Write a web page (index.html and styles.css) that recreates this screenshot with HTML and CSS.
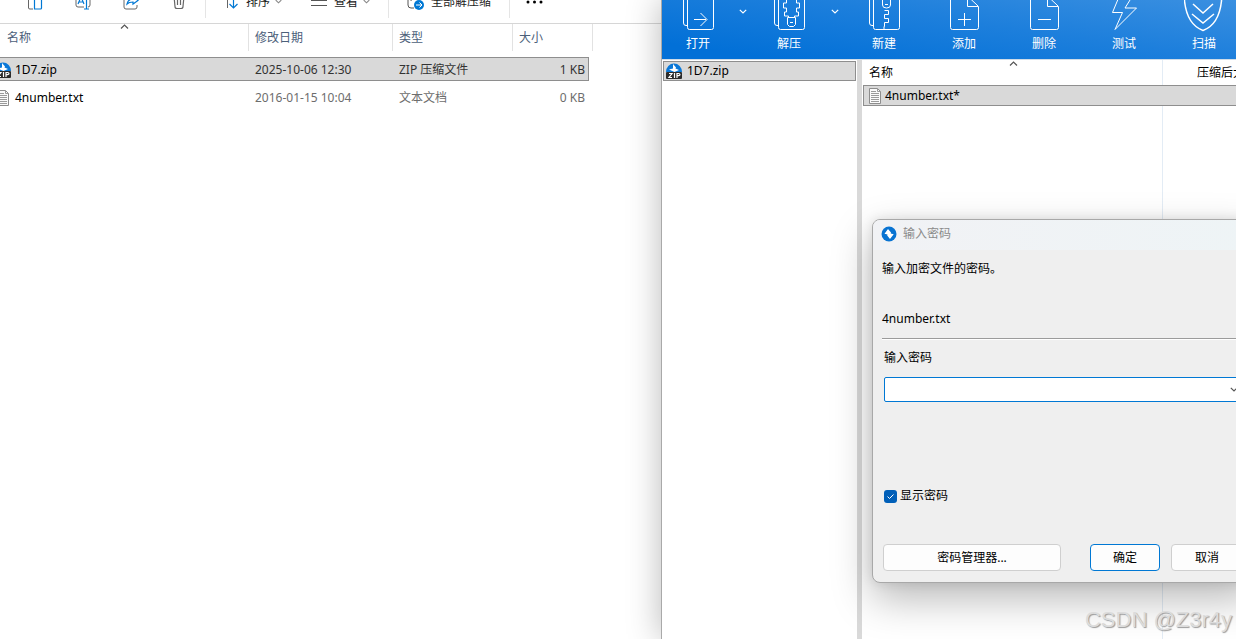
FILE: index.html
```html
<!DOCTYPE html>
<html lang="zh-CN">
<head>
<meta charset="utf-8">
<title>1D7.zip</title>
<link rel="stylesheet" href="styles.css">
</head>
<body>
<svg class="defs" width="0" height="0" aria-hidden="true">
  <symbol id="zip" viewBox="0 0 16 16">
    <path d="M0 9A8 8.500 0 0 1 16 9z" fill="#0a78d8"/>
    <path d="M7 1l3 3.500-.5 1L13 7 8.500 9 3 6.500 7 5.500z" fill="#fff"/>
    <rect y="9" width="16" height="7" rx="1" fill="#2b2b2b"/>
    <path d="M3 10.500h3l-3 4h3M8.500 10v5M11 15v-4.500h1.500q1.500 0 1.500 1t-1.500 1.200H11" fill="none" stroke="#fff" stroke-width="1.200"/>
  </symbol>
  <symbol id="txt" viewBox="0 0 12 16">
    <path d="M.5.500h8l3 3v12H.5z" fill="#fafafa" stroke="#8d8d8d"/>
    <path d="M8.500.500v3h3M2 3.500h5M2 5.500h8M2 7.500h8M2 9.500h8M2 11.500h8M2 13.500h8" fill="none" stroke="#9a9a9a"/>
  </symbol>
  <symbol id="down" viewBox="0 0 8 5"><path d="M.8.800L4 4 7.200.800" fill="none" stroke="currentColor" stroke-width="1.200"/></symbol>
  <symbol id="up" viewBox="0 0 8 5"><path d="M.5 4.500L4 1l3.500 3.500" fill="none" stroke="currentColor" stroke-width="1.200"/></symbol>
</svg>

<main class="desktop">
  <section class="explorer">
    <nav class="toolbar">
      <button class="tool" aria-label="复制"><svg width="16" height="16" fill="none"><path d="M6 .5H3q-1.500 0-1.500 1.500v12q0 1 1.500 1h3" stroke="#666"/><path d="M7.500.500h6q1 0 1 1v12.500q0 1-1 1h-6z" stroke="#0078d4" stroke-width="1.200"/></svg></button>
      <button class="tool" aria-label="重命名"><svg width="16" height="16" fill="none"><path d="M9 2.500H3q-2 0-2 2V11q0 2 2 2h6M13 2.500q2 0 2 2V11q0 2-2 2" stroke="#666"/><path d="M3 10l3-7 3 7M4 8h4M11.500 1v14M9 15h5" stroke="#0078d4" stroke-width="1.200"/></svg></button>
      <button class="tool" aria-label="共享"><svg width="16" height="16" fill="none"><path d="M5 2H3q-2 0-2 2v9q0 2 2 2h9q2 0 2-2v-2" stroke="#666"/><path d="M4 10q1-5 6-5V2l5 4.500L10 10V8q-4 0-6 2z" stroke="#0078d4" stroke-width="1.200"/></svg></button>
      <button class="tool" aria-label="删除"><svg width="16" height="16" fill="none"><path d="M2 1.500h12M3 2l1 10.500q0 2 2 2h4q2 0 2-2L13 2M6.500 4v7M9.500 4v7" stroke="#666" stroke-width="1.200"/></svg></button>
      <button class="tool sort"><svg width="16" height="16" fill="none"><path d="M4.500 1v13M2 3l2.500-2" stroke="#666"/><path d="M10.500 1v13M6.500 10l4 4 4-4" stroke="#0078d4" stroke-width="1.200"/></svg><span>排序</span><svg class="caret" width="7" height="5"><use href="#down"/></svg></button>
      <button class="tool view"><svg width="16" height="16" fill="none"><path d="M0 6.500h16M0 11.500h16" stroke="#555"/></svg><span>查看</span><svg class="caret" width="7" height="5"><use href="#down"/></svg></button>
      <button class="tool extract"><svg width="18" height="18" fill="none"><path d="M1 1v11q0 3 3 3h3M5 1l-1 7" stroke="#555"/><circle cx="12" cy="12" r="5" fill="#0078d4"/><path d="M9 12h5.500M12.500 9.500L15 12l-2.500 2.500" stroke="#fff"/></svg><span>全部解压缩</span></button>
      <button class="tool more" aria-label="更多"><svg width="17" height="4"><circle cx="2" cy="2" r="1.500"/><circle cx="8.500" cy="2" r="1.500"/><circle cx="15" cy="2" r="1.500"/></svg></button>
    </nav>
    <table class="files">
      <colgroup><col class="c-name"><col class="c-date"><col class="c-type"><col class="c-size"><col class="c-end"></colgroup>
      <thead><tr><th><svg class="sorted" width="9" height="5"><use href="#up"/></svg>名称</th><th>修改日期</th><th>类型</th><th class="last">大小</th><th></th></tr></thead>
      <tbody>
        <tr class="selected"><td><span class="file"><svg width="11" height="16" viewBox="5 0 11 16"><use href="#zip" width="16" height="16"/></svg>1D7.zip</span></td><td>2025-10-06 12:30</td><td>ZIP 压缩文件</td><td class="num">1 KB</td></tr>
        <tr><td><span class="file"><svg width="11" height="16" viewBox="3 0 11 16"><use href="#txt" width="12" height="16"/></svg>4number.txt</span></td><td>2016-01-15 10:04</td><td>文本文档</td><td class="num">0 KB</td></tr>
      </tbody>
    </table>
  </section>

  <section class="archiver">
    <nav class="ribbon">
      <button class="act first"><svg width="32" height="48" fill="none"><path d="M5.500 43.500H4q-2.500 0-2.500-2.500V4"/><path d="M5.500 2v43.500q0 2 2 2h22q2 0 2-2V2M12 37.500h12M18.500 31l6.500 6.500-6.500 6.500"/></svg>打开</button>
      <button class="drop" aria-label="打开选项"><svg width="8" height="5"><use href="#down"/></svg></button>
      <button class="act"><svg width="32" height="48" fill="none"><path d="M5.500 43.500H4q-2.500 0-2.500-2.500V4"/><path d="M5.500 2v43.500q0 2 2 2h22q2 0 2-2V2"/><path d="M13.500 14v7h-3v5h3v4h-2v4h4v2M23.500 14v7h3v5h-3v4h2v4h-4v2M14.500 35.500h8v7l-2 2h-4l-2-2zM17 40.500h3"/></svg>解压</button>
      <button class="drop" aria-label="解压选项"><svg width="8" height="5"><use href="#down"/></svg></button>
      <button class="act"><svg width="32" height="48" fill="none"><path d="M5.500 43.500H4q-2.500 0-2.500-2.500V4"/><path d="M5.500 2v43.500q0 2 2 2h22q2 0 2-2V2"/><path d="M14.500 13v10q0 3 4 3t4-3V13M17 22.500h3M16.500 28.500h4v4h-4v4h4v4h-4v4h-.500v3"/></svg>新建</button>
      <button class="act"><svg width="30" height="48" fill="none"><path d="M1.500 6v39.500q0 2 2 2h24q2 0 2-2V24.500h-11V10M18.500 14l10.500 10M15.500 31v13M9 37.500h13"/></svg>添加</button>
      <button class="act"><svg width="30" height="48" fill="none"><path d="M1.500 6v39.500q0 2 2 2h24q2 0 2-2V24.500h-11V10M18.500 14l10.500 10M9 37.500h13"/></svg>删除</button>
      <button class="act"><svg width="28" height="48" fill="none"><path d="M11 10L2.500 30.500h10L5 47.500 26.500 26H15l10-16"/></svg>测试</button>
      <button class="act"><svg width="40" height="52" fill="none"><path d="M.5 18v3C2 35 7 46 19 50.500 31 46 36 35 37.500 21v-3" stroke-width="1.500"/><path d="M9 24l10 9 10-9M8 34l11 9 11-9" stroke-width="1.500"/></svg>扫描</button>
    </nav>
    <div class="panes">
      <aside class="tree"><a class="node" href="#"><svg width="16" height="16"><use href="#zip"/></svg>1D7.zip</a></aside>
      <div class="list">
        <table class="entries">
          <colgroup><col class="e-name"><col></colgroup>
          <thead><tr><th><svg class="sorted" width="9" height="5"><use href="#up"/></svg>名称</th><th class="packed">压缩后大小</th></tr></thead>
          <tbody><tr><td><span class="file"><svg width="12" height="16"><use href="#txt"/></svg>4number.txt*</span></td><td></td></tr></tbody>
        </table>
      </div>
    </div>
  </section>

  <form class="dialog" role="dialog" aria-labelledby="title">
    <header class="titlebar"><svg width="16" height="16"><circle cx="8" cy="8" r="7.500" fill="#0873d2"/><path d="M7 3l3 3.500-.3 1 3 .8L9 13 6.200 9.500l.3-1-3-.8z" fill="#fff"/></svg><span id="title">输入密码</span></header>
    <div class="content">
      <p class="prompt">输入加密文件的密码。</p>
      <p class="target">4number.txt</p>
      <label class="caption" for="pwd">输入密码</label>
      <div class="combo"><input id="pwd" type="text"><button type="button" aria-label="历史密码"><svg width="8" height="5"><use href="#down"/></svg></button></div>
      <label class="show"><input type="checkbox" checked><svg class="tick" width="13" height="13"><path d="M3.500 6.500L5.500 8.500 9.500 4.500" fill="none" stroke="#fff"/></svg>显示密码</label>
      <div class="buttons"><button type="button" class="manager">密码管理器...</button><button type="button" class="ok">确定</button><button type="button">取消</button></div>
    </div>
  </form>
  <div class="watermark">CSDN @Z3r4y</div>
</main>
</body>
</html>
```
FILE: styles.css
```css
* { box-sizing: border-box; }
html, body { height: 100%; margin: 0; overflow: hidden; }
body, button, input {
  font: 12px/16px "Noto Sans", "Noto Sans CJK SC", sans-serif;
}
body { color: #000; background: #fff; }
button { padding: 0; border: 0; background: none; color: inherit; }
svg { display: block; flex: none; }
table { border-spacing: 0; table-layout: fixed; }
th, td { padding: 0; font-weight: 400; text-align: left; white-space: nowrap; }
p { margin: 0; }
.defs { position: absolute; }
.desktop { position: relative; height: 100%; overflow: hidden; }

.explorer { height: 100%; display: flow-root; }
.toolbar {
  display: flex;
  align-items: center;
  height: 44px;
  margin-top: -20px;
  padding-left: 11px;
  border-bottom: 1px solid #d6d6d6;
  color: #1b1b1b;
}
.tool { display: flex; align-items: center; justify-content: center; width: 48px; height: 32px; }
.tool:nth-child(4) { margin-right: 2px; }
.caret { color: #888; margin-left: 6px; }
.sort, .view, .extract, .more { width: auto; height: 32px; gap: 7px; }
.sort, .extract, .more { border-left: 1px solid #e5e5e5; }
.sort .caret, .view .caret { margin-left: -2px; }
.sort { padding: 0 29px 0 17px; }
.view { width: 77px; justify-content: flex-start; }
.extract { width: 121px; gap: 6px; }
.more { width: 50px; }

.files { width: 593px; color: #6d6d6d; }
.c-name { width: 249px; }
.c-date { width: 144px; }
.c-type { width: 120px; }
.c-size { width: 76px; }
.c-end { width: 4px; }
.files th { position: relative; height: 27px; padding: 1px 0 0 6px; border-right: 1px solid #e2e2e2; color: #4c607a; }
.files th:first-child { padding-left: 7px; }
.files th.last { border-right: 0; }
.files th:last-child { padding: 0; }
.files thead::after { content: ""; display: table-row; height: 6px; }
.files td { height: 32px; padding: 2px 4px 0 6px; }
.files td:first-child { padding-left: 0; color: #000; }
.files .selected td { height: 24px; padding-top: 1px; border: 1px solid #8e8e8e; border-width: 1px 0; background: #d9d9d9; color: #333; }
.files .selected td:first-child { color: #000; }
.files .selected td.num { border-right-width: 1px; padding-right: 3px; }
.files .num { text-align: right; }
.file { display: flex; align-items: center; gap: 4px; }
.sorted { position: absolute; top: 0; left: 120px; color: #555; }

.archiver {
  position: absolute;
  inset: 0 0 0 661px;
  display: flex;
  flex-direction: column;
  border-left: 1px solid #a9a9a9;
  background: #fff;
  box-shadow: 0 0 32px rgba(0, 0, 0, .28);
}
.ribbon {
  display: flex;
  flex: none;
  height: 79px;
  margin-top: -20px;
  overflow: hidden;
  background: linear-gradient(8deg, #0270d7 10%, #1d7fdc 50%, #4495e2);
  color: #fff;
}
.ribbon svg { stroke: #fff; }
.ribbon .drop svg { stroke: none; }
.act { display: flex; flex: none; flex-direction: column; align-items: center; justify-content: flex-end; gap: 6px; width: 80px; padding-bottom: 7px; }
.act.first { width: 72px; }
.act:nth-child(3) { width: 74px; }
.act:last-child { gap: 4px; }
.drop { display: flex; flex: none; align-items: flex-start; justify-content: center; width: 18px; padding-top: 29px; }
.panes { display: flex; flex: 1; min-height: 0; border-top: 1px solid #cfdce8; }
.tree { flex: none; width: 200px; padding: 1px; border-right: 5px solid #d9d9d9; }
.node { display: flex; align-items: center; gap: 5px; height: 20px; padding-left: 2px; border: 1px solid #8e8e8e; background: #d9d9d9; color: #000; text-decoration: none; }
.list { flex: 1; min-width: 0; overflow: hidden; padding-left: 1px; background: linear-gradient(#e3ecf5, #e3ecf5) 300px 0 / 1px 100% no-repeat; }
.entries { width: 100%; }
.e-name { width: 300px; }
.entries th { position: relative; height: 25px; padding-left: 6px; }
.entries th.packed { padding-left: 34px; }
.entries .sorted { left: 146px; top: 1px; }
.entries td { height: 21px; border: 1px solid #8e8e8e; border-width: 1px 0; background: #d9d9d9; }
.entries td:first-child { border-left-width: 1px; padding-left: 5px; }

.dialog {
  position: absolute;
  top: 219px;
  left: 872px;
  right: -20px;
  border: 1px solid #a8a8a8;
  border-radius: 8px;
  background: #efefef;
  box-shadow: 0 16px 40px rgba(0, 0, 0, .28), 0 0 12px rgba(0, 0, 0, .1);
  overflow: hidden;
}
.titlebar { display: flex; align-items: center; gap: 6px; height: 30px; padding: 0 8px 2px; background: linear-gradient(90deg, #f1f2f5, #eef4f6); color: #8b8b8b; }
.content { display: flex; flex-direction: column; padding: 11px 12px 11px 9px; }
.target { margin-top: 34px; padding-bottom: 11px; border-bottom: 1px solid #9b9b9b; box-shadow: 0 1px #fff; }
.caption { margin: 11px 0 11px 2px; }
.combo { display: flex; height: 25px; margin-left: 2px; border: 1px solid #0078d4; border-radius: 2px; background: #fff; }
.combo input { flex: 1; min-width: 0; padding: 0 6px; border: 0; outline: 0; background: none; }
.combo button { display: flex; align-items: center; justify-content: center; width: 16px; color: #555; }
.show { display: flex; align-items: center; align-self: flex-start; position: relative; gap: 3px; margin: 86px 0 0 2px; }
.show input { appearance: none; width: 13px; height: 13px; margin: 0; border-radius: 3px; background: #005fb8; }
.tick { position: absolute; left: 0; }
.buttons { display: flex; margin: 40px 0 0 1px; }
.buttons button { width: 72px; height: 27px; border: 1px solid #cfcfcf; border-radius: 4px; background: #fdfdfd; }
.buttons .manager { width: 178px; margin-right: 29px; }
.buttons .ok { width: 70px; margin-right: 11px; border-color: #0078d4; }
.watermark { position: absolute; right: 4px; bottom: 4px; font: 22px/30px "Liberation Sans", sans-serif; color: #dcdcdc; text-shadow: 1px 1px 1px #9a9a9a; }
```
